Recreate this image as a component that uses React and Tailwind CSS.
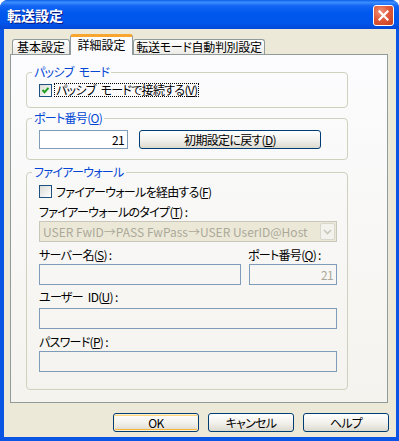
import React from 'react';

const JP = "font-['Noto_Sans_CJK_JP',sans-serif] [font-feature-settings:'palt']";

const CheckBox = ({ checked }) => (
    <span className="w-[13px] h-[13px] shrink-0 border border-[#1C5180] bg-gradient-to-br from-[#DCDCD7] to-white flex items-center justify-center">
        {checked && (
            <svg width="9" height="9" viewBox="0 0 9 9">
                <polyline points="1.5,4 3.5,6.2 7.5,1.8" fill="none" stroke="#21A121" strokeWidth="2" />
            </svg>
        )}
    </span>
);

const XpButton = ({ children, isDefault, className = '' }) => (
    <button
        className={`h-[19px] border border-[#003C74] rounded-[3px] bg-gradient-to-b from-white via-[#F3F2EE] to-[#DCD9CE] text-[12px] leading-[14px] text-black flex items-center justify-center ${isDefault ? 'shadow-[inset_0_0_0_1px_#FFF0CF,inset_0_-2px_0_#F7B43A,inset_0_2px_0_#FCD57C]' : ''} ${className}`}
    >
        {children}
    </button>
);

const GroupBox = ({ label, className = '', children }) => (
    <fieldset className={`w-[322px] border border-[#D0D0BF] rounded-[4px] pl-[12px] ${className}`}>
        <legend className="-ml-[7px] px-[2px] text-[#0046D5] leading-[12px]">{label}</legend>
        {children}
    </fieldset>
);

const Edit = ({ value, dim, className = '' }) => (
    <div className={`h-[21px] border border-[#7F9DB9] flex items-center justify-end pr-[3px] ${dim ? 'text-[#ACA899]' : 'text-black'} ${className}`}>
        {value}
    </div>
);

export default function App() {
    return (
        <div className={`w-[399px] h-[441px] flex flex-col bg-[#0A55E4] rounded-t-[8px] overflow-hidden text-[12px] leading-[14px] tracking-[-0.7px] ${JP}`}>
            <div className="h-[29px] shrink-0 flex items-center justify-between pl-[7px] pr-[5px] pt-[1px] bg-[linear-gradient(to_bottom,#0A5FE8_0%,#3D8FFF_8%,#1366F5_20%,#0058EE_45%,#0055EA_80%,#0046D6_100%)]">
                <span className="text-white font-bold text-[14px] tracking-[0px] [text-shadow:1px_1px_0_#0A1883]">転送設定</span>
                <div className="w-[21px] h-[21px] rounded-[3px] border border-white bg-[radial-gradient(circle_at_35%_30%,#F0957A_0%,#E1593A_45%,#C4401F_100%)] flex items-center justify-center">
                    <svg width="11" height="11" viewBox="0 0 11 11">
                        <path d="M1.5 1.5 L9.5 9.5 M9.5 1.5 L1.5 9.5" stroke="white" strokeWidth="2.2" strokeLinecap="square" />
                    </svg>
                </div>
            </div>

            <div className="flex-1 ml-[4px] mr-[3px] mb-[4px] bg-[#ECE9D8] flex flex-col pt-[5px] pl-[6px]">
                <div className="h-[20px] flex items-end pl-[2px]">
                    <div className="w-[58px] h-[15px] border border-b-0 border-[#919B9C] rounded-t-[3px] bg-gradient-to-b from-white to-[#ECEBE6] flex items-center justify-center tracking-[0px]">
                        基本設定
                    </div>
                    <div className="relative z-10 w-[63px] h-[21px] -mb-[1px] border-x border-[#919B9C] border-t-[3px] border-t-[#F8A630] rounded-t-[3px] bg-[#FCFCFE] flex items-center justify-center pb-[2px] tracking-[0px]">
                        詳細設定
                    </div>
                    <div className="w-[132px] h-[15px] border border-b-0 border-[#919B9C] rounded-t-[3px] bg-gradient-to-b from-white to-[#ECEBE6] flex items-center justify-center tracking-[-0.3px]">
                        転送モード自動判別設定
                    </div>
                </div>

                <div className="w-[378px] h-[349px] border border-[#919B9C] bg-gradient-to-b from-[#FCFCFE] to-[#F4F3EE] pl-[15px] flex flex-col">
                    <GroupBox label={<>パッシブ<span className="ml-[5px]">モード</span></>} className="mt-[11px] pt-[5px] pb-[10px]">
                        <div className="h-[14px] flex items-center gap-[2px]">
                            <CheckBox checked />
                            <span className="border border-dotted border-black px-[1px] leading-[12px]">
                                パッシブ<span className="ml-[5px]">モードで接続する(<u>V</u>)</span>
                            </span>
                        </div>
                    </GroupBox>

                    <GroupBox label={<>ポート番号(<u>O</u>)</>} className="mt-[4px] pt-[6px] pb-[10px]">
                        <div className="flex items-center gap-[11px]">
                            <div className="w-[89px] h-[19px] border border-[#7F9DB9] bg-white flex items-center justify-end pr-[3px]">21</div>
                            <XpButton className="w-[182px]">初期設定に戻す(<u>D</u>)</XpButton>
                        </div>
                    </GroupBox>

                    <GroupBox label="ファイアーウォール" className="mt-[6px] pt-[7px] pb-[17px]">
                        <div className="h-[13px] flex items-center gap-[4px]">
                            <CheckBox />
                            <span>ファイアーウォールを経由する(<u>F</u>)</span>
                        </div>
                        <div className="mt-[7px]">ファイアーウォールのタイプ(<u>T</u>) :</div>
                        <div className="mt-[2px] w-[298px] h-[21px] border border-[#C9C7BA] bg-[#EBE8D8] flex items-center pl-[3px] pr-[1px] text-[#ACA899] tracking-[0px]">
                            <span className="flex-1">USER FwID→PASS FwPass→USER UserID@Host</span>
                            <span className="w-[15px] h-[17px] rounded-[2px] border border-[#DAD8CC] bg-[#F3F2EC] flex items-center justify-center">
                                <svg width="9" height="6" viewBox="0 0 9 6">
                                    <polyline points="1,1 4.5,4.5 8,1" fill="none" stroke="#C9C7BA" strokeWidth="1.6" />
                                </svg>
                            </span>
                        </div>
                        <div className="mt-[6px] flex">
                            <span className="w-[209px]">サーバー名(<u>S</u>) :</span>
                            <span>ポート番号(<u>Q</u>) :</span>
                        </div>
                        <div className="mt-[2px] flex gap-[8px]">
                            <Edit className="w-[202px]" />
                            <Edit className="w-[88px]" value="21" dim />
                        </div>
                        <div className="mt-[5px]">ユーザー<span className="ml-[5px]">ID(<u>U</u>) :</span></div>
                        <Edit className="mt-[4px] w-[298px]" />
                        <div className="mt-[6px]">パスワード(<u>P</u>) :</div>
                        <Edit className="mt-[2px] w-[298px]" />
                    </GroupBox>
                </div>

                <div className="mt-[10px] flex justify-end gap-[9px] pr-[7px]">
                    <XpButton isDefault className="w-[86px]">OK</XpButton>
                    <XpButton className="w-[86px]">キャンセル</XpButton>
                    <XpButton className="w-[86px]">ヘルプ</XpButton>
                </div>
            </div>
        </div>
    );
}
